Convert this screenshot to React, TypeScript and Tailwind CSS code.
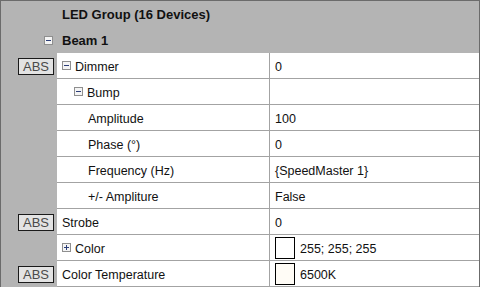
import React from "react";

function Box({ plus = false }: { plus?: boolean }) {
  return (
    <svg width="9" height="9" viewBox="0 0 9 9" className="shrink-0 block">
      <rect x="0.5" y="0.5" width="8" height="8" fill="#f4f4f4" stroke="#8f8f8f" />
      <line x1="2" y1="4.5" x2="7" y2="4.5" stroke="#2c3e78" strokeWidth="1" />
      {plus && <line x1="4.5" y1="2" x2="4.5" y2="7" stroke="#2c3e78" strokeWidth="1" />}
    </svg>
  );
}

function Abs() {
  return (
    <div className="w-[36px] h-[17px] border border-[#1a1a1a] bg-[#e3e3e3] text-[#4a4a4a] text-[13px] leading-[15px] flex items-center justify-center">
      ABS
    </div>
  );
}

type Row = {
  name: string;
  indent: number;
  box?: "minus" | "plus";
  abs?: boolean;
  value?: string;
  swatch?: string;
};

const rows: Row[] = [
  { name: "Dimmer", indent: 0, box: "minus", abs: true, value: "0" },
  { name: "Bump", indent: 1, box: "minus", value: "" },
  { name: "Amplitude", indent: 2, value: "100" },
  { name: "Phase (°)", indent: 2, value: "0" },
  { name: "Frequency (Hz)", indent: 2, value: "{SpeedMaster 1}" },
  { name: "+/- Ampliture", indent: 2, value: "False" },
  { name: "Strobe", indent: 0, abs: true, value: "0" },
  { name: "Color", indent: 0, box: "plus", value: "255; 255; 255", swatch: "#ffffff" },
  { name: "Color Temperature", indent: 0, abs: true, value: "6500K", swatch: "#fffcf6" },
];

export default function App() {
  return (
    <div
      className="w-[480px] h-[287px] bg-[#b4b4b4] border-t border-l border-r border-[#6b6b6b] overflow-hidden text-[#111] text-[12.5px]"
      style={{ fontFamily: '"Liberation Sans", Arial, sans-serif' }}
    >
      <div className="h-[26px] flex items-center pl-[61px] font-bold text-[13px]">
        <span className="mt-[2px]">LED Group (16 Devices)</span>
      </div>
      <div className="h-[26px] flex items-center pl-[43px] font-bold text-[13px]">
        <Box />
        <span className="ml-[9px] mt-[2px]">Beam 1</span>
      </div>
      {rows.map((r, i) => (
        <div key={i} className="h-[26px] flex">
          <div className="w-[56px] flex items-center justify-end pr-[3px]">{r.abs && <Abs />}</div>
          <div className="flex-1 flex bg-white border-b border-[#a3a3a3]">
            <div
              className="w-[212px] flex items-center"
              style={{ paddingLeft: r.indent === 0 ? 5 : r.indent === 1 ? 17 : 31 }}
            >
              {r.box && <Box plus={r.box === "plus"} />}
              <span className={r.box ? "ml-[4px] mt-[3px]" : "mt-[3px]"}>{r.name}</span>
            </div>
            <div className="flex-1 flex items-center border-l border-[#a3a3a3] pl-[5px]">
              {r.swatch && (
                <div className="w-[20px] h-[22px] border border-black mr-[5px]" style={{ background: r.swatch }} />
              )}
              <span className="mt-[3px]">{r.value}</span>
            </div>
          </div>
        </div>
      ))}
    </div>
  );
}
